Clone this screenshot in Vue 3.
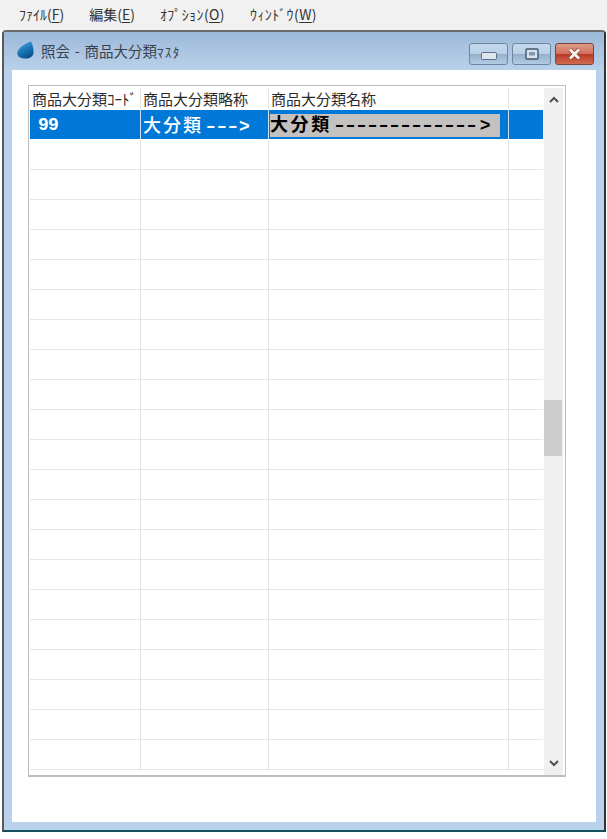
<script setup>
const menus = [
  { label: 'ﾌｧｲﾙ(', key: 'F', wide: false },
  { label: '編集(', key: 'E', wide: false },
  { label: 'ｵﾌﾟｼｮﾝ(', key: 'O', wide: true },
  { label: 'ｳｨﾝﾄﾞｳ(', key: 'W', wide: true }
]
const emptyRows = Array.from({ length: 21 }, (_, i) => i)
</script>

<template>
  <div class="screen">
    <nav class="menubar">
      <span v-for="m in menus" :key="m.key" class="menu-item" :class="{ wide: m.wide }">{{ m.label }}<u>{{ m.key }}</u>)</span>
    </nav>
    <section class="window">
      <header class="titlebar">
        <svg class="app-icon" width="17" height="18" viewBox="0 0 17 18">
          <defs>
            <linearGradient id="drop" x1="0.2" y1="0" x2="0.7" y2="1">
              <stop offset="0" stop-color="#45a6de" />
              <stop offset="0.55" stop-color="#1673b4" />
              <stop offset="1" stop-color="#0b4a82" />
            </linearGradient>
          </defs>
          <path d="M14 0.5C15.6 3.5 16.8 8 16.5 11.5C16.2 15 13.5 17.5 9.5 17.6C5.5 17.8 1 16.6 0.4 13C0 10 2.5 7 5.5 4.8C8 3 11 1.5 14 0.5Z" fill="url(#drop)" />
        </svg>
        <h1 class="title">照会 - 商品大分類<span class="title-kana">ﾏｽﾀ</span></h1>
        <div class="controls">
          <button class="ctl">
            <svg class="glyph-min" width="16" height="8" viewBox="0 0 16 8"><rect x="0.5" y="0.5" width="15" height="7" rx="1" fill="#dfe5ea" stroke="#5d6f82" /></svg>
          </button>
          <button class="ctl">
            <svg width="14" height="12" viewBox="0 0 14 12"><rect x="1" y="1" width="12" height="10" rx="1" fill="#d6e3ee" stroke="#43566b" stroke-width="1.4" /><rect x="4" y="4" width="6" height="3.5" fill="#7f97ad" /></svg>
          </button>
          <button class="ctl close">
            <svg width="15" height="12" viewBox="0 0 15 12"><path d="M3 1.5L12 10.5M12 1.5L3 10.5" stroke="#7d3a2d" stroke-width="4.4" /><path d="M3 1.5L12 10.5M12 1.5L3 10.5" stroke="#f6f1ee" stroke-width="3" /></svg>
          </button>
        </div>
      </header>
      <main class="client">
        <div class="grid">
          <div class="table">
            <div class="row head">
              <div class="c c1">商品大分類ｺｰﾄﾞ</div>
              <div class="c c2">商品大分類略称</div>
              <div class="c c3">商品大分類名称</div>
              <div class="c c4"></div>
            </div>
            <div class="row selected">
              <div class="c c1 code">99</div>
              <div class="c c2 abbr">大分類<span class="dashes">---</span><span class="gt">&gt;</span></div>
              <div class="c c3"><div class="editor">大分類<span class="dashes">-------------</span><span class="gt">&gt;</span></div></div>
              <div class="c c4"></div>
            </div>
            <div v-for="r in emptyRows" :key="r" class="row empty">
              <div class="c c1"></div>
              <div class="c c2"></div>
              <div class="c c3"></div>
              <div class="c c4"></div>
            </div>
          </div>
          <aside class="scrollbar">
            <svg class="arrow up" width="10" height="7" viewBox="0 0 10 7"><path d="M1 6L5 2L9 6" fill="none" stroke="#505050" stroke-width="2" /></svg>
            <div class="track"><div class="thumb"></div></div>
            <svg class="arrow down" width="10" height="7" viewBox="0 0 10 7"><path d="M1 1L5 5L9 1" fill="none" stroke="#505050" stroke-width="2" /></svg>
          </aside>
        </div>
      </main>
    </section>
  </div>
</template>

<style>
html, body { margin: 0; background: #fff; }
</style>

<style scoped>
.screen {
  width: 607px;
  height: 839px;
  overflow: hidden;
  background: #fff;
  font-family: "Noto Sans CJK JP", "Noto Sans", sans-serif;
  color: #1a1a1a;
}
.menubar {
  height: 30px;
  box-sizing: border-box;
  padding: 4px 0 0 19px;
  background: #f1f1f1;
  display: flex;
  gap: 25px;
  font-size: 14px;
  line-height: 20px;
  color: #333;
}
.menu-item { white-space: nowrap; }
.menu-item.wide { letter-spacing: 0.4px; }
.window {
  margin-left: 2px;
  width: 604px;
  height: 802px;
  box-sizing: border-box;
  border: 2px solid #5a5a5a;
  border-top-color: #6b6b6b;
  border-right-color: #333;
  border-bottom: 2px solid #14505a;
  border-radius: 4px 4px 0 0;
  background: #b9d1ea;
  display: flex;
  flex-direction: column;
}
.titlebar {
  height: 38px;
  flex: none;
  box-sizing: border-box;
  display: flex;
  align-items: center;
  padding: 0 10px 0 13px;
  background: linear-gradient(#9db9d9, #b9d1ea);
}
.app-icon { flex: none; margin-bottom: 2px; }
.title {
  margin: 0 0 2px 7px;
  flex: 1;
  font-size: 14.5px;
  font-weight: 400;
  word-spacing: 1.5px;
  color: #39424c;
  white-space: nowrap;
}
.title-kana { font-size: 13px; letter-spacing: 1.3px; }
.controls { display: flex; gap: 4px; margin-top: 6px; }
.ctl {
  width: 39px;
  height: 22px;
  padding: 0;
  border: 1px solid #6d87a3;
  border-radius: 3px;
  background: linear-gradient(#c5d9ec 0, #b8d0e7 48%, #94b0cc 52%, #b3cce4 100%);
  display: flex;
  align-items: center;
  justify-content: center;
}
.glyph-min { margin-top: 4px; }
.ctl.close {
  border-color: #7a4438;
  background: linear-gradient(#dc9c8a 0, #d2705c 48%, #b83a28 52%, #cf6a50 100%);
}
.client {
  flex: 1;
  margin: 0 8px 8px 8px;
  background: #fff;
  padding: 15px 30px 0 16px;
  min-height: 0;
}
.grid {
  width: 538px;
  height: 692px;
  box-sizing: border-box;
  border: 1px solid #bdbdbd;
  border-bottom-width: 2px;
  padding: 2px 3px 0 1px;
  display: flex;
  overflow: hidden;
}
.table { width: 513px; flex: none; overflow: hidden; }
.row { display: flex; box-sizing: border-box; height: 30px; }
.c { box-sizing: border-box; border-right: 1px solid #e3e3e3; flex: none; }
.c1 { width: 111px; }
.c2 { width: 128px; }
.c3 { width: 240px; }
.c4 { width: 34px; border-right: 0; }
.head { height: 22px; }
.head .c {
  font-size: 15px;
  line-height: 21px;
  padding-left: 2px;
  color: #2b2b2b;
  font-weight: 400;
  white-space: nowrap;
  overflow: hidden;
}
.selected {
  height: 29px;
  margin-bottom: 1px;
  background: #0078d7;
  color: #fff;
}
.selected .c { border-right-color: #cfe2f5; }
.code {
  font-family: "Liberation Mono", monospace;
  font-weight: 700;
  font-size: 18px;
  line-height: 30px;
  padding-left: 8px;
  letter-spacing: -0.8px;
}
.abbr {
  font-size: 18px;
  line-height: 28px;
  font-weight: 500;
  padding-left: 2px;
  letter-spacing: 2px;
  white-space: nowrap;
}
.dashes {
  font-family: "Liberation Mono", monospace;
  font-weight: 400;
  font-size: 26px;
  letter-spacing: -4.6px;
  vertical-align: -2px;
}
.gt {
  font-family: "Liberation Mono", monospace;
  font-weight: 700;
  margin-left: 5px;
  letter-spacing: 0;
}
.abbr .gt { margin-left: 3px; }
.editor {
  margin: 4px 8px 2px 1px;
  height: 23px;
  background: #c4c2c0;
  color: #000;
  font-size: 18px;
  line-height: 18px;
  font-weight: 700;
  letter-spacing: 2.6px;
  white-space: nowrap;
}
.empty { border-bottom: 1px solid #e6e6e6; }
.empty .c { height: 30px; }
.scrollbar {
  width: 19px;
  margin-left: 1px;
  flex: none;
  background: #f0f0f0;
  display: flex;
  flex-direction: column;
  align-items: center;
}
.arrow { flex: none; }
.arrow.up { margin-top: 8px; }
.arrow.down { margin-bottom: 8px; }
.track { flex: 1; width: 100%; padding-top: 297px; box-sizing: border-box; }
.thumb { height: 56px; width: 18px; background: #cdcdcd; }
u { text-underline-offset: 2px; }
</style>
